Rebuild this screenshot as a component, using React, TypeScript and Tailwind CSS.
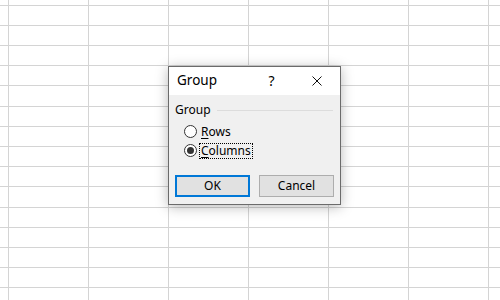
import React from "react";

const colWidths = [9, 80, 80, 80, 80, 80, 80, 11];
const rowHeights = [6, 20, 20, 20, 20, 21, 20, 20, 20, 20, 21, 20, 20, 20, 20, 12];

const font = { fontFamily: '"Noto Sans", "Open Sans", sans-serif' };

const Radio = ({ checked }: { checked?: boolean }) => (
  <div className="w-[13px] h-[13px] rounded-full border border-[#333] bg-white flex items-center justify-center shrink-0">
    {checked && <div className="w-[7px] h-[7px] rounded-full bg-[#333]" />}
  </div>
);

const App = () => {
  return (
    <div className="relative w-[500px] h-[300px] overflow-hidden bg-white" style={font}>
      {/* Spreadsheet grid */}
      <div className="flex flex-col">
        {rowHeights.map((h, r) => (
          <div key={r} className="flex" style={{ height: h }}>
            {colWidths.map((w, c) => (
              <div
                key={c}
                className={`border-[#d4d4d4] ${c < colWidths.length - 1 ? "border-r" : ""} ${r < rowHeights.length - 1 ? "border-b" : ""}`}
                style={{ width: w }}
              />
            ))}
          </div>
        ))}
      </div>

      {/* Dialog */}
      <div className="absolute left-[168px] top-[66px] w-[173px] h-[139px] border border-[#6b6b6b] bg-[#f0f0f0] shadow-[0_2px_12px_rgba(0,0,0,0.28)] flex flex-col text-black">
        <div className="h-[28px] bg-white flex items-center">
          <span className="flex-1 pl-[8px] text-[13.5px] leading-none">Group</span>
          <span className="w-[45px] text-center text-[14px] leading-none">?</span>
          <div className="w-[46px] flex justify-center">
            <svg width="10" height="10" viewBox="0 0 10 10">
              <path d="M0.5 0.5 L9.5 9.5 M9.5 0.5 L0.5 9.5" stroke="#111" strokeWidth="1" />
            </svg>
          </div>
        </div>

        <div className="flex-1 flex flex-col px-[6px] pt-[7px]">
          <div className="h-[16px] flex items-center text-[12px] leading-[16px]">
            <span>Group</span>
            <div className="flex-1 h-px bg-[#dcdcdc] ml-[6px] mr-[1px]" />
          </div>

          <div className="mt-[4px] pl-[9px] flex flex-col text-[12px] leading-[14px]">
            <div className="h-[19px] flex items-center">
              <Radio />
              <span className="ml-[2px] border border-transparent px-[1px]">
                <span className="underline underline-offset-2">R</span>ows
              </span>
            </div>
            <div className="h-[19px] flex items-center">
              <Radio checked />
              <span className="ml-[2px] border border-dotted border-black px-[1px]">
                <span className="underline underline-offset-2">C</span>olumns
              </span>
            </div>
          </div>

          <div className="mt-[15px] flex gap-[9px]">
            <button className="w-[75px] h-[22px] border-2 border-[#0078d7] bg-[#e1e1e1] text-[12px] leading-none">
              OK
            </button>
            <button className="w-[75px] h-[22px] border border-[#adadad] bg-[#e1e1e1] text-[12px] leading-none">
              Cancel
            </button>
          </div>
        </div>
      </div>
    </div>
  );
};

export default App;
